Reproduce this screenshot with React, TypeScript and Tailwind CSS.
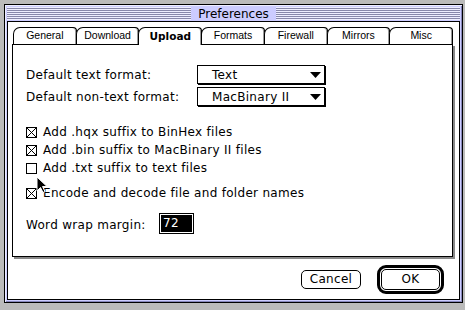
import type { ReactNode } from 'react';

const tabs = ['General', 'Download', 'Upload', 'Formats', 'Firewall', 'Mirrors', 'Misc'];

const checks = [
  { label: 'Add .hqx suffix to BinHex files', on: true },
  { label: 'Add .bin suffix to MacBinary II files', on: true },
  { label: 'Add .txt suffix to text files', on: false },
];

const stripes =
  'bg-[repeating-linear-gradient(to_bottom,#eeeeff_0px,#eeeeff_1px,#8888aa_1px,#8888aa_2px)]';

function Popup({ value }: { value: string }) {
  return (
    <div className="w-[128px] h-[19px] border border-black bg-white shadow-[1px_1px_0_#000] flex items-center pl-[14px] pr-[3px]">
      <span className="flex-1">{value}</span>
      <svg width="11" height="6" viewBox="0 0 11 6">
        <path d="M0 0 H11 L5.5 6 Z" fill="#000" />
      </svg>
    </div>
  );
}

function Checkbox({ on, children }: { on: boolean; children: ReactNode }) {
  return (
    <div className="h-[18px] flex items-center gap-[6px]">
      <svg width="11" height="11" viewBox="0 0 11 11" className="shrink-0">
        <rect x="0.5" y="0.5" width="10" height="10" fill="#fff" stroke="#000" />
        {on && <path d="M1 1 L10 10 M10 1 L1 10" stroke="#000" strokeWidth="1" />}
      </svg>
      <span>{children}</span>
    </div>
  );
}

export default function App() {
  return (
    <div
      className="relative w-[465px] h-[310px] bg-[#bbbbbb] p-[4px] text-[12px] tracking-[0.3px] text-black"
      style={{ fontFamily: '"DejaVu Sans", Verdana, sans-serif' }}
    >
      <div className="w-[459px] h-[299px] border border-black bg-[#ccccff] shadow-[inset_1px_1px_0_#eeeeff,inset_-1px_-1px_0_#8888bb] flex flex-col px-[2px] pb-[2px]">
        {/* title bar */}
        <div className="h-[16px] flex items-start pt-[2px]">
          <div className={`flex-1 h-[13px] ${stripes}`} />
          <span className="px-[7px] leading-none tracking-normal pt-[1px]">Preferences</span>
          <div className={`flex-1 h-[13px] ${stripes}`} />
        </div>

        <div className="flex-1 border border-black bg-white flex flex-col">
          {/* tabs */}
          <div className="flex ml-[5px] mt-[5px] w-[440px] h-[17px] relative z-10">
            {tabs.map((t, i) => (
              <div
                key={t}
                className={`flex-1 ${i > 0 ? '-ml-px' : ''} border border-black border-b-0 rounded-tl-[7px] rounded-tr-[4px] bg-white shadow-[inset_-1px_0_0_#999999] flex items-center justify-center text-[10.5px] tracking-normal ${
                  t === 'Upload' ? 'font-bold h-[18px] z-10' : 'h-[17px]'
                }`}
                style={{ fontFamily: t === 'Upload' ? '"DejaVu Sans", sans-serif' : '"Liberation Sans", Arial, sans-serif' }}
              >
                {t}
              </div>
            ))}
          </div>

          {/* panel */}
          <div className="ml-[4px] w-[441px] h-[213px] border border-black bg-white shadow-[2px_2px_0_#888888] flex flex-col pl-[13px] pt-[20px]">
            <div className="flex items-center h-[19px]">
              <span className="w-[171px]">Default text format:</span>
              <Popup value="Text" />
            </div>
            <div className="flex items-center h-[19px] mt-[3px]">
              <span className="w-[171px]">Default non-text format:</span>
              <Popup value="MacBinary II" />
            </div>

            <div className="mt-[17px] flex flex-col">
              {checks.map((c) => (
                <Checkbox key={c.label} on={c.on}>
                  {c.label}
                </Checkbox>
              ))}
              <div className="mt-[7px]">
                <Checkbox on>Encode and decode file and folder names</Checkbox>
              </div>
            </div>

            <div className="mt-[11px] flex items-center h-[21px]">
              <span className="w-[133px] pt-[3px]">Word wrap margin:</span>
              <div className="w-[35px] h-[21px] border border-black p-[1px]">
                <div className="w-full h-full bg-black text-white pl-[2px] leading-[17px]">72</div>
              </div>
            </div>
          </div>

          {/* buttons */}
          <div className="flex-1 flex items-center justify-end gap-[16px] pr-[15px] pt-[2px]">
            <button className="w-[60px] h-[19px] border border-black rounded-[5px] bg-white leading-none">
              Cancel
            </button>
            <div className="w-[67px] h-[29px] border-[3px] border-black rounded-[9px] p-[1px]">
              <button className="w-full h-full border border-black rounded-[5px] bg-white leading-none">
                OK
              </button>
            </div>
          </div>
        </div>
      </div>

      {/* mouse pointer */}
      <svg className="absolute left-[36px] top-[176px]" width="12" height="18" viewBox="0 0 12 18">
        <path
          d="M1 1 V15 L4.5 11.5 L7 16.5 L9 15.5 L6.5 10.5 H11 Z"
          fill="#000"
          stroke="#fff"
          strokeWidth="1"
        />
      </svg>
    </div>
  );
}
